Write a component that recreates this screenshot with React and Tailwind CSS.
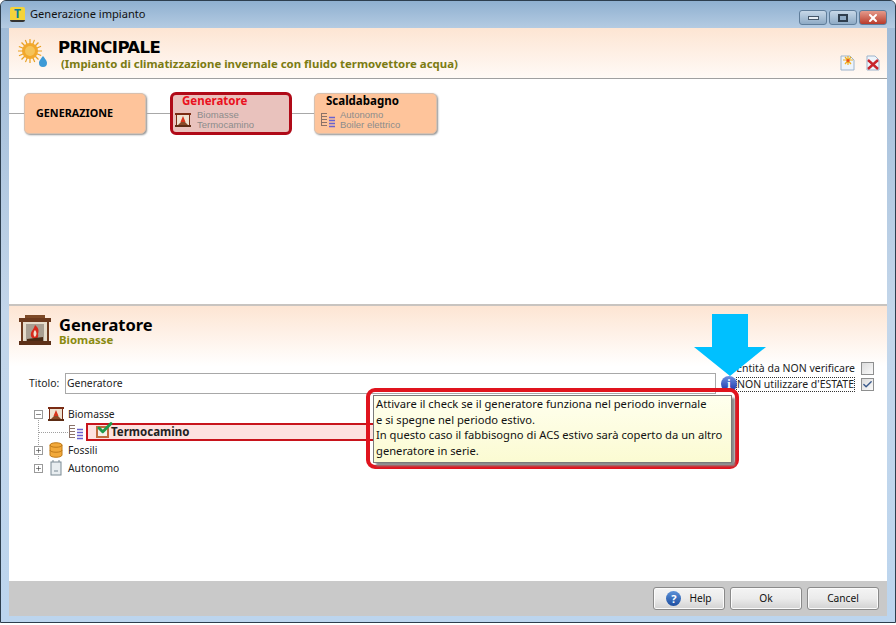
import { Check, X, Minus, Plus } from 'lucide-react';

const Fireplace = () => (
  <svg width="32" height="32" viewBox="0 0 32 32">
    <rect x="3" y="5" width="26" height="22" fill="#e6dccb" stroke="#6b3a1e" strokeWidth="2" />
    <rect x="0" y="3" width="32" height="4" fill="#6b3a1e" />
    <rect x="6" y="0" width="20" height="3" fill="#7d4a28" />
    <rect x="0" y="26" width="32" height="4" fill="#5c3018" />
    <rect x="7" y="9" width="18" height="17" fill="#a89f92" />
    <path d="M16 10c4 3 4 6 3 9 1 3-1 5-3 5s-5-2-4-6c1-3 3-4 4-8z" fill="#d82a1c" />
    <path d="M16 15c2 2 2 5 0 7-2-1-2-5 0-7z" fill="#f4e2d0" />
    <path d="M8 24l16-2v4H8z" fill="#4a2a14" />
  </svg>
);

const FireplaceSmall = () => (
  <svg width="16" height="16" viewBox="0 0 16 16">
    <rect x="1.5" y="2" width="13" height="12" fill="#eee2d2" stroke="#7a2c14" />
    <rect x="0" y="1" width="16" height="2" fill="#7a2c14" />
    <path d="M8 4l2.5 6h-5z" fill="#d8341c" />
    <path d="M3 13l3-3h4l3 3z" fill="#8a4a28" />
    <rect x="0" y="13" width="16" height="2" fill="#5c2c14" />
  </svg>
);

const ListIcon = () => (
  <svg width="16" height="16" viewBox="0 0 16 16">
    <path d="M1.5 1v13M1 1.5h6M1 4.5h6M1 7.5h6M1 10.5h6M1 13.5h6" stroke="#8a7268" fill="none" />
    <path d="M9 5.5h6M9 8.5h6M9 11.5h6M9 14.5h6" stroke="#6a62d0" strokeWidth="1.6" />
  </svg>
);

const ExpandBox = ({ open }) => (
  <span className="relative w-[9px] h-[9px] border border-[#9a9a9a] bg-white flex items-center justify-center text-[#333] shrink-0">
    {open ? <Minus size={7} strokeWidth={2} /> : <Plus size={7} strokeWidth={2} />}
  </span>
);

const Connector = ({ w }) => <div className={`h-px bg-[#a8a8a8] shrink-0 ${w}`} />;

const TextBlock = ({ a, b }) => (
  <div className="text-[9.5px] leading-[10px] text-[#8c8c8c] font-['Liberation_Sans',sans-serif]">
    <div>{a}</div>
    <div>{b}</div>
  </div>
);

const WinButton = ({ children, className }) => (
  <div className={`w-[28px] h-[15px] border border-[#5f7d9a] rounded-[3px] flex items-center justify-center ${className}`}>
    {children}
  </div>
);

const FootButton = ({ children }) => (
  <button className="w-[72px] h-[23px] border border-[#8a8a8a] rounded-[3px] bg-gradient-to-b from-[#f4f4f4] via-[#ebebeb] to-[#d2d2d2] text-[10.2px] text-[#111] flex items-center justify-center gap-[8px] shadow-[inset_0_0_0_1px_#fbfbfb]">
    {children}
  </button>
);

const Checkbox = ({ checked }) => (
  <span className="w-[13px] h-[13px] border border-[#8e8f8f] bg-gradient-to-br from-[#dcdcdc] to-[#fafafa] flex items-center justify-center text-[#3a5a8c] shrink-0">
    {checked && <Check size={11} strokeWidth={3} />}
  </span>
);

export default function App() {
  return (
    <div className="relative w-[896px] h-[623px] overflow-hidden flex flex-col bg-gradient-to-b from-[#9db9d6] via-[#c3d6ea] to-[#bcd5ee] border border-[#2d3e4e] rounded-t-[6px] font-['Noto_Sans',sans-serif] text-black">
      {/* Title bar */}
      <div className="h-[27px] shrink-0 flex items-center pl-[9px] pr-[8px] bg-gradient-to-b from-[#8fb0d0] to-[#b4cbe2]">
        <div className="w-[15px] h-[15px] rounded-[2px] bg-[#f4d33a] border-b-2 border-[#333] flex items-center justify-center text-[12px] leading-none font-bold text-[#0a7f9c]">T</div>
        <span className="ml-[5px] text-[11.1px] text-[#111]">Generazione impianto</span>
        <div className="ml-auto flex gap-[2px] mt-[6px]">
          <WinButton className="bg-gradient-to-b from-[#c7d8e8] to-[#8eaac5]">
            <span className="w-[11px] h-[4px] bg-[#e8eef4] border border-[#47586a]" />
          </WinButton>
          <WinButton className="bg-gradient-to-b from-[#c7d8e8] to-[#8eaac5]">
            <span className="w-[10px] h-[8px] bg-[#8eaac5] border-2 border-[#2f3e4e]" />
          </WinButton>
          <WinButton className="bg-gradient-to-b from-[#e49a8c] to-[#b8392a]">
            <X size={12} strokeWidth={4} className="text-white" />
          </WinButton>
        </div>
      </div>

      <div className="flex-1 min-h-0 flex flex-col ml-[8px] mr-[8px] mb-[6px] bg-white">
        {/* Header */}
        <div className="h-[51px] shrink-0 flex bg-gradient-to-b from-[#fde5d3] to-[#fffaf6] border-b border-[#a0a0a0] relative">
          <div className="relative w-[30px] h-[30px] ml-[9px] mt-[11px] shrink-0">
            <svg width="30" height="30" viewBox="0 0 30 30">
              <g stroke="#e8a020" strokeWidth="1.2">
                {[0, 22, 45, 67, 90, 112, 135, 157].map((r) => (
                  <path key={r} d="M12 0v24" transform={`rotate(${r} 12 12)`} />
                ))}
              </g>
              <circle cx="12" cy="12" r="8" fill="#f2a82c" />
              <circle cx="12" cy="12" r="5" fill="#f6c358" />
              <path d="M25 17c3 4 4 5 4 7a4 4 0 0 1-8 0c0-2 1-3 4-7z" fill="#3d9ad6" />
            </svg>
          </div>
          <div className="ml-[10px] flex flex-col">
            <div className="mt-[11px] text-[16.5px] leading-[18px] font-bold font-['DejaVu_Sans',sans-serif] tracking-[-0.6px]">PRINCIPALE</div>
            <div className="ml-[3px] text-[11.4px] leading-[13px] font-bold text-[#7b7b12]">(Impianto di climatizzazione invernale con fluido termovettore acqua)</div>
          </div>
          <div className="ml-auto flex gap-[11px] mt-[27px] mr-[7px]">
            <svg width="15" height="16" viewBox="0 0 15 16">
              <path d="M1 1h9l4 4v10H1z" fill="#eef4fb" stroke="#9db4cc" />
              <path d="M8 1v9M3 5h10M5 2l6 7M11 2L5 9" stroke="#f0b020" strokeWidth="1.2" />
              <circle cx="8" cy="5.5" r="1.6" fill="#e8501c" />
            </svg>
            <svg width="14" height="16" viewBox="0 0 14 16">
              <path d="M1 1h8l4 4v10H1z" fill="#eef4fb" stroke="#9db4cc" />
              <path d="M2 5l10 9M12 5L2 14" stroke="#c8242c" strokeWidth="2.4" />
            </svg>
          </div>
        </div>

        {/* Diagram */}
        <div className="h-[225px] shrink-0 pt-[13px] bg-white">
          <div className="flex items-center h-[42px]">
            <Connector w="w-[15px]" />
            <div className="w-[122px] h-[41px] shrink-0 rounded-[5px] bg-[#fec49b] border border-[#d8c0ae] shadow-[1px_1px_2px_#909090] flex items-center pl-[11px] text-[10.8px] font-bold">GENERAZIONE</div>
            <Connector w="w-[24px]" />
            <div className="w-[122px] h-[43px] rounded-[6px] bg-[#e9c2bd] border-[3px] border-[#b00a18] pl-[2px] shrink-0">
              <div className="ml-[7px] text-[11.5px] leading-[12px] font-bold text-[#ea1020]">Generatore</div>
              <div className="flex items-center gap-[6px] mt-[3px]">
                <FireplaceSmall />
                <TextBlock a="Biomasse" b="Termocamino" />
              </div>
            </div>
            <Connector w="w-[22px]" />
            <div className="w-[123px] h-[41px] rounded-[5px] bg-[#fec49b] border border-[#d8c0ae] shadow-[1px_1px_2px_#909090] pl-[5px] shrink-0">
              <div className="ml-[6px] text-[11.5px] leading-[13px] font-bold">Scaldabagno</div>
              <div className="flex items-center gap-[4px] mt-[3px]">
                <ListIcon />
                <TextBlock a="Autonomo" b="Boiler elettrico" />
              </div>
            </div>
          </div>
        </div>

        {/* Splitter */}
        <div className="h-[2px] shrink-0 bg-[#c8c4c0]" />

        {/* Entity panel */}
        <div className="flex-1 min-h-0 bg-gradient-to-b from-[#fde5d3] via-white via-[22%] to-white flex flex-col">
          <div className="flex items-start pl-[10px] pt-[9px] h-[67px] shrink-0">
            <Fireplace />
            <div className="ml-[8px]">
              <div className="mt-[1px] text-[16.5px] leading-[18px] font-bold">Generatore</div>
              <div className="text-[11.4px] leading-[12px] font-bold text-[#8a8a10]">Biomasse</div>
            </div>
          </div>

          <div className="relative flex items-center h-[21px] pl-[20px] pr-[13px] shrink-0">
            <span className="text-[10.4px] text-[#222] w-[36px]">Titolo:</span>
            <div className="w-[651px] h-[21px] border border-[#a8a8a8] bg-white pl-[1px] text-[10.4px] leading-[19px] text-[#222]">Generatore</div>
            <div className="absolute right-[13px] top-[-11px] flex flex-col gap-[3px] text-[10.5px] text-[#222]">
              <div className="flex items-center justify-end gap-[6px] h-[13px]">
                <span>Entità da NON verificare</span>
                <Checkbox />
              </div>
              <div className="flex items-center justify-end gap-[6px] h-[13px]">
                <span className="border border-dotted border-[#333] leading-[13px]">NON utilizzare d'ESTATE</span>
                <Checkbox checked />
              </div>
            </div>
          </div>

          {/* Tree */}
          <div className="relative mt-[11px] pl-[25px] text-[10.3px] text-[#222]">
            {/* dotted guide lines */}
            <div className="absolute left-[29px] top-[9px] h-[45px] border-l border-dotted border-[#a0a0a0]" />
            <div className="absolute left-[29px] top-[27px] w-[30px] border-t border-dotted border-[#a0a0a0]" />
            <div className="flex items-center h-[18px]">
              <ExpandBox open />
              <span className="ml-[5px]"><FireplaceSmall /></span>
              <span className="ml-[4px] mt-[2px]">Biomasse</span>
            </div>
            <div className="relative flex items-center h-[18px] pl-[34px]">
              <ListIcon />
              <div className="ml-[2px] w-[300px] h-[18px] border-2 border-[#c8141c] bg-[#fde2e0] flex items-center pl-[8px]">
                <span className="relative w-[13px] h-[12px] border-2 border-[#c06a3c] bg-[#f4f0e8] shrink-0">
                  <Check size={18} strokeWidth={4} className="absolute left-[-2px] top-[-9px] text-[#1f9a4a]" />
                </span>
                <span className="ml-[2px] font-bold text-[11.5px]">Termocamino</span>
              </div>
            </div>
            <div className="flex items-center h-[18px]">
              <ExpandBox />
              <svg className="ml-[5px] relative" width="16" height="16" viewBox="0 0 16 16">
                <path d="M2 3c0-3 12-3 12 0v10c0 3-12 3-12 0z" fill="#f2a93a" stroke="#c07a18" />
                <path d="M2 3c0 3 12 3 12 0M2 8c0 3 12 3 12 0" fill="none" stroke="#c07a18" />
              </svg>
              <span className="ml-[4px] mt-[2px]">Fossili</span>
            </div>
            <div className="flex items-center h-[18px]">
              <ExpandBox />
              <svg className="ml-[5px]" width="16" height="16" viewBox="0 0 16 16">
                <rect x="3" y="2" width="10" height="13" fill="#e8edf0" stroke="#7a8a94" />
                <path d="M5 0v2M11 0v2M6 11h4" stroke="#7a8a94" />
              </svg>
              <span className="ml-[4px] mt-[2px]">Autonomo</span>
            </div>
          </div>
        </div>

        {/* Footer */}
        <div className="h-[35px] shrink-0 bg-[#c9c9c9] flex items-center justify-end gap-[5px] pr-[8px]">
          <FootButton>
            <span className="w-[15px] h-[15px] rounded-full bg-gradient-to-b from-[#5d92d8] to-[#1c4da0] text-white text-[11px] font-bold leading-[15px] text-center">?</span>
            <span>Help</span>
          </FootButton>
          <FootButton>Ok</FootButton>
          <FootButton>Cancel</FootButton>
        </div>
      </div>

      {/* Annotation arrow */}
      <svg className="absolute left-[692px] top-[313px]" width="74" height="63" viewBox="0 0 74 63">
        <path d="M19 0h36v33h18L37 62 1 33h18z" fill="#00c0ff" />
      </svg>

      {/* Info icon */}
      <div className="absolute left-[720px] top-[375px] w-[16px] h-[16px] rounded-full bg-gradient-to-b from-[#6f8fe0] to-[#1c2fa8] text-white text-[12px] font-bold leading-[16px] text-center font-['Liberation_Serif',serif]">i</div>

      {/* Tooltip with red highlight */}
      <div className="absolute left-[365px] top-[387px] w-[373px] h-[81px] border-[4px] border-[#e0141e] rounded-[9px]" />
      <div className="absolute left-[372px] top-[394px] w-[359px] h-[68px] border border-[#7a7a7a] bg-gradient-to-b from-[#ffffee] to-[#fbfbd2] shadow-[3px_3px_2px_#8a8a8a] pl-[2px] text-[11.2px] leading-[15.6px] text-[#111]">
        <div>Attivare il check se il generatore funziona nel periodo invernale</div>
        <div>e si spegne nel periodo estivo.</div>
        <div>In questo caso il fabbisogno di ACS estivo sarà coperto da un altro</div>
        <div>generatore in serie.</div>
      </div>
    </div>
  );
}
